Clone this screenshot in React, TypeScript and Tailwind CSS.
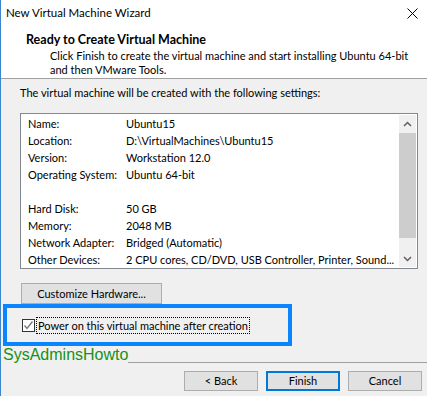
export default function App() {
  const rows: [string, string][] = [
    ["Name:", "Ubuntu15"],
    ["Location:", "D:\\VirtualMachines\\Ubuntu15"],
    ["Version:", "Workstation 12.0"],
    ["Operating System:", "Ubuntu 64-bit"],
    ["", ""],
    ["Hard Disk:", "50 GB"],
    ["Memory:", "2048 MB"],
    ["Network Adapter:", "Bridged (Automatic)"],
    ["Other Devices:", "2 CPU cores, CD/DVD, USB Controller, Printer, Sound..."],
  ];

  return (
    <div className="w-[427px] h-[396px] bg-[#f0f0f0] border-l border-[#3c86cf] overflow-hidden text-[11px] text-black font-['Lato','Liberation_Sans',sans-serif] flex flex-col">
      {/* header */}
      <div className="h-[79px] bg-white border-b border-[#a0a0a0] flex flex-col">
        <div className="h-[26px] flex items-center justify-between pl-[5px] pr-[9px]">
          <span className="leading-[16px] text-[11.5px]">New Virtual Machine Wizard</span>
          <svg width="11" height="11" viewBox="0 0 11 11" className="text-black">
            <path d="M0.5 0.5 L10.5 10.5 M10.5 0.5 L0.5 10.5" stroke="currentColor" strokeWidth="1" />
          </svg>
        </div>
        <div className="pl-[25px] mt-[6px] font-bold text-[12.5px] leading-[16px]">Ready to Create Virtual Machine</div>
        <div className="pl-[49px] mt-[1px] leading-[14px]">
          Click Finish to create the virtual machine and start installing Ubuntu 64-bit
          <br />
          and then VMware Tools.
        </div>
      </div>

      <div className="pl-[19px] mt-[6px] leading-[16px]">The virtual machine will be created with the following settings:</div>

      {/* settings list */}
      <div className="ml-[19px] mt-[12px] w-[398px] h-[156px] border border-[#828790] bg-white flex">
        <div className="flex-1 pl-[7px] pt-[2px] overflow-hidden">
          {rows.map(([k, v], i) => (
            <div key={i} className="h-[17px] flex items-center whitespace-nowrap">
              <span className="w-[98px] shrink-0">{k}</span>
              <span>{v}</span>
            </div>
          ))}
        </div>
        <div className="w-[17px] my-[1px] mr-[1px] bg-[#f0f0f0] flex flex-col">
          <div className="h-[17px] flex items-center justify-center">
            <svg width="9" height="6" viewBox="0 0 9 6">
              <path d="M1 5 L4.5 1.5 L8 5" fill="none" stroke="#606060" strokeWidth="1.5" />
            </svg>
          </div>
          <div className="mt-[1px] h-[105px] bg-[#cdcdcd]" />
          <div className="flex-1" />
          <div className="h-[17px] flex items-center justify-center">
            <svg width="9" height="6" viewBox="0 0 9 6">
              <path d="M1 1 L4.5 4.5 L8 1" fill="none" stroke="#606060" strokeWidth="1.5" />
            </svg>
          </div>
        </div>
      </div>

      <button className="ml-[20px] mt-[14px] w-[141px] h-[21px] bg-[#e1e1e1] border border-[#adadad] leading-[16px] flex items-center justify-center">
        Customize Hardware...
      </button>

      {/* highlighted checkbox area */}
      <div className="ml-[2px] w-[289px] h-[42px] border-[4px] border-[#0a84ff] flex items-center pl-[15px]">
        <div className="w-[13px] h-[13px] border border-[#333333] bg-white flex items-center justify-center">
          <svg width="11" height="11" viewBox="0 0 11 11">
            <path d="M1.5 5.5 L4 8.5 L9.5 1.5" fill="none" stroke="#7a7a7a" strokeWidth="1.4" />
          </svg>
        </div>
        <span className="ml-[1px] px-[1px] leading-[15px] border border-dotted border-black">
          Power on this virtual machine after creation
        </span>
      </div>

      <div className="flex items-end h-[17px]">
        <span className="ml-[2px] text-[16px] leading-[17px] text-[#179117] font-['Liberation_Sans',sans-serif]">SysAdminsHowto</span>
        <div className="flex-1 h-px bg-[#a0a0a0]" />
      </div>

      <div className="mt-[8px] flex justify-end gap-[8px] pr-[5px]">
        <button className="w-[74px] h-[20px] bg-[#e1e1e1] border border-[#adadad] leading-[16px]">&lt; Back</button>
        <button className="w-[74px] h-[20px] bg-[#e1e1e1] border-2 border-[#0078d7] leading-[16px]">Finish</button>
        <button className="w-[74px] h-[20px] bg-[#e1e1e1] border border-[#adadad] leading-[16px]">Cancel</button>
      </div>
    </div>
  );
}
